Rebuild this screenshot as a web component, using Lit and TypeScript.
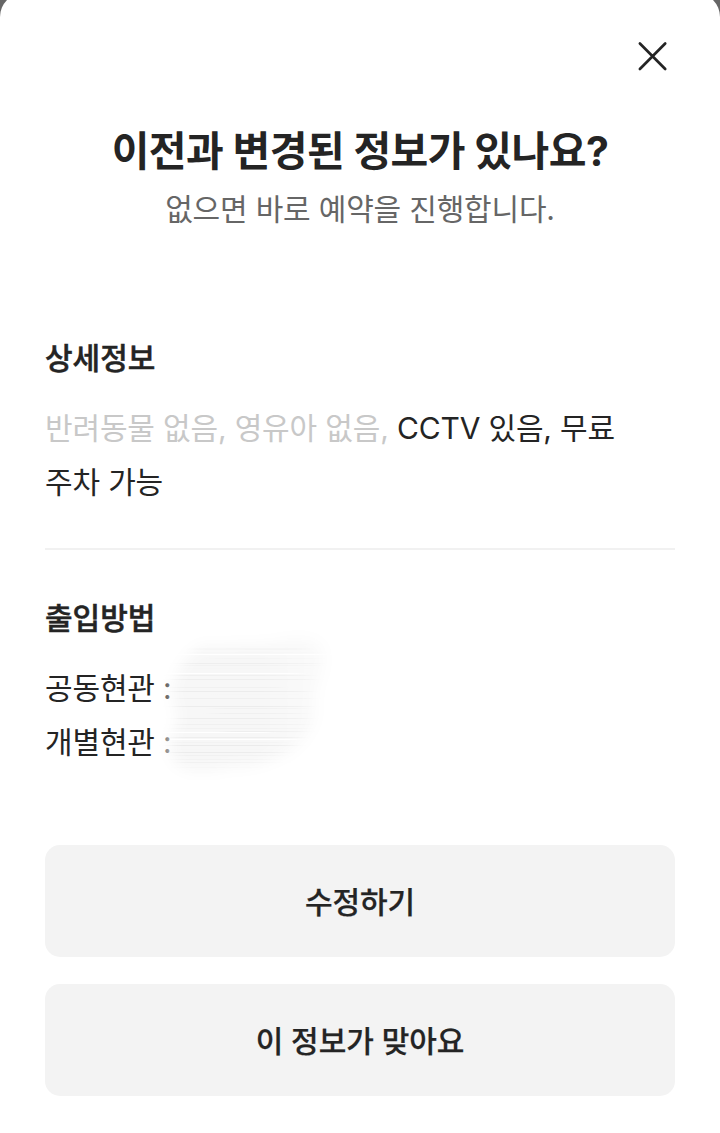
import { LitElement, html, svg, css } from "lit";
import { customElement } from "lit/decorators.js";

// Horizontal streaks of the privacy smudge: [y, x, width, height, grey]
const streaks: number[][] = [
  [9, 110, 50, 1, 248], [14, 50, 120, 1, 246], [18, 30, 120, 2, 242], [22, 30, 140, 1, 245], [24, 20, 150, 1, 255],
  [28, 60, 110, 1, 244], [33, 10, 155, 1, 238], [35, 20, 145, 1, 242], [38, 10, 150, 1, 246], [43, 5, 140, 1, 255],
  [45, 5, 150, 1, 240], [49, 5, 155, 1, 238], [53, 20, 140, 1, 247], [57, 5, 120, 1, 241], [61, 0, 155, 1, 236],
  [64, 60, 90, 1, 246], [68, 20, 140, 1, 240], [72, 30, 130, 1, 247], [76, 5, 150, 1, 236], [78, 60, 90, 1, 241],
  [83, 60, 90, 1, 240], [88, 10, 145, 1, 237], [91, 40, 110, 1, 246], [94, 10, 145, 1, 240], [98, 10, 145, 1, 242],
  [101, 70, 85, 1, 238], [102, 5, 110, 1, 255], [107, 5, 145, 1, 238], [109, 5, 140, 1, 255], [112, 10, 120, 1, 243],
  [115, 5, 140, 1, 235], [119, 20, 110, 1, 246], [122, 5, 130, 1, 236], [125, 20, 110, 1, 241], [129, 5, 120, 1, 242],
  [132, 20, 110, 1, 239], [137, 10, 100, 1, 243], [142, 20, 70, 1, 245],
];

@customElement("app-root")
export class AppRoot extends LitElement {
  static styles = css`
    :host { display: block; height: 1133px; background: #666; overflow: hidden; font-family: "Inter", "Noto Sans CJK KR", sans-serif; color: #242424; }
    * { box-sizing: border-box; }
    .sheet { height: 1140px; margin-top: -7px; background: #fff; border-radius: 24px 24px 0 0; padding: 45px 45px 0; display: flex; flex-direction: column; }
    .top { display: flex; justify-content: flex-end; height: 36px; padding-right: 5px; }
    .close { border: 0; padding: 0; background: none; width: 36px; height: 36px; }
    svg { display: block; }
    h1, h2, p { margin: 0; white-space: nowrap; }
    h1 { margin-top: 48px; font-size: 41px; line-height: 58px; text-align: center; font-weight: 700; letter-spacing: -0.5px; }
    .sub { font-size: 30px; line-height: 44px; margin-top: 7px; text-align: center; color: #666; letter-spacing: -0.18px; }
    h2 { font-size: 30px; line-height: 44px; font-weight: 500; -webkit-text-stroke: 0.5px #242424; }
    .details { margin-top: 105px; height: 214px; border-bottom: 2px solid #f1f1f1; }
    .body { font-size: 30px; line-height: 54px; margin-top: 21px; letter-spacing: -0.16px; }
    .muted { color: #c8c8c8; }
    .access { margin-top: 46px; position: relative; }
    .smudge { position: absolute; left: 110px; top: 34px; pointer-events: none; }
    .c1 { color: #505050; }
    .c2 { color: #6c6c6c; }
    .actions { margin-top: 76px; display: grid; gap: 27px; }
    .btn { height: 112px; border: 0; border-radius: 15px; padding: 0 0 2px; background: #f3f3f3; font: 500 30px "Inter", "Noto Sans CJK KR", sans-serif; letter-spacing: -0.05px; color: #242424; -webkit-text-stroke: 0.25px #242424; }
  `;
  render() {
    return html`<main class="sheet">
      <div class="top"><button class="close" aria-label="닫기"><svg width="36" height="36" viewBox="0 0 36 36" fill="none" stroke="#242424" stroke-width="2.7" stroke-linecap="round"><path d="M5.9 5.5 31.2 31M31.2 5.5 5.9 31"/></svg></button></div>
      <h1>이전과 변경된 정보가 있나요?</h1>
      <p class="sub">없으면 바로 예약을 진행합니다.</p>
      <section class="details"><h2>상세정보</h2><p class="body"><span class="muted">반려동물 없음, 영유아 없음,</span> CCTV 있음, 무료<br>주차 가능</p></section>
      <section class="access"><h2>출입방법</h2><p class="body">공동현관 <span class="c1">:</span><br>개별현관 <span class="c2">:</span></p>
        <svg class="smudge" width="180" height="150" viewBox="0 0 180 150" aria-hidden="true">
          <defs>
            <filter id="edge" x="-20%" y="-20%" width="140%" height="140%"><feGaussianBlur stdDeviation="7"/></filter>
            <filter id="soft" x="-10%" y="-10%" width="120%" height="120%"><feGaussianBlur stdDeviation="7 0.6"/></filter>
            <linearGradient id="fade" x2="1" y2="0"><stop offset="0" stop-color="#fff"/><stop offset=".6" stop-color="#fff"/><stop offset="1" stop-color="#888"/></linearGradient>
            <mask id="shape"><path filter="url(#edge)" fill="url(#fade)" d="M45 16Q85 16 118 14Q148 4 166 14Q173 30 165 48Q158 68 161 85Q156 105 138 120Q105 138 75 137Q40 146 24 136Q10 124 17 107L24 85Q16 73 18 55Q26 30 45 16Z"/></mask>
          </defs>
          <g mask="url(#shape)"><rect width="180" height="150" fill="#f7f7f7"/>
            <g filter="url(#soft)">${streaks.map(([y, x, w, h, g]) => svg`<rect x=${x} y=${y} width=${w} height=${h} fill=${`rgb(${g},${g},${g})`}></rect>`)}</g>
          </g>
        </svg>
      </section>
      <div class="actions"><button class="btn">수정하기</button><button class="btn">이 정보가 맞아요</button></div>
    </main>`;
  }
}
